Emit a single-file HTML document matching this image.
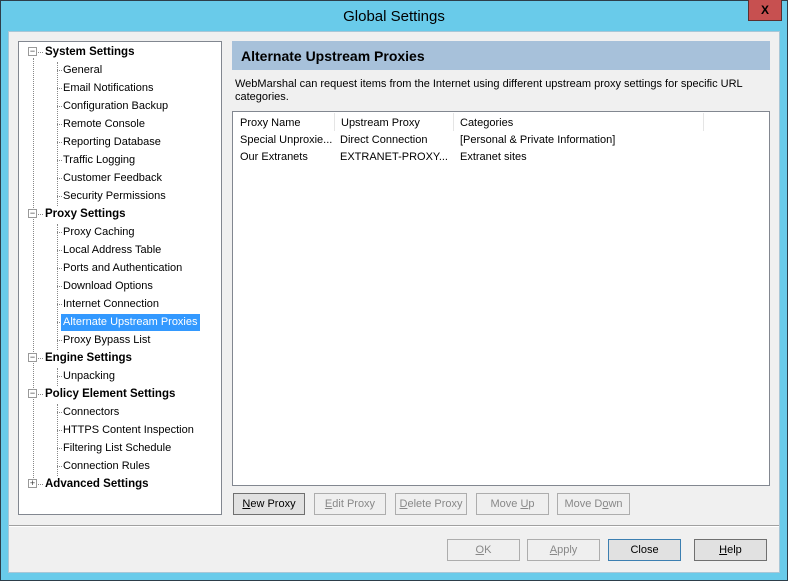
<!DOCTYPE html><html><head><style>
*{margin:0;padding:0;box-sizing:border-box}
body{width:788px;height:581px;background:#69cbea;font-family:"Liberation Sans",sans-serif;font-size:11px;color:#000;position:relative;overflow:hidden}
.frame{position:absolute;left:0;top:0;width:788px;height:581px;border:1px solid #2d3e4a}
.title{position:absolute;left:0;top:8px;width:788px;text-align:center;font-size:15px;color:#000}
.x{position:absolute;left:748px;top:0;width:34px;height:21px;background:#c75050;border:1px solid #5a3030;border-top:none;text-align:center;font-weight:bold;font-size:12px;line-height:20px}
.client{position:absolute;left:8px;top:31px;width:772px;height:542px;background:#f0f0f0;border:1px solid #a9c7d7}
.abs{position:absolute;white-space:nowrap}
.tree{position:absolute;left:18px;top:41px;width:204px;height:474px;background:#fff;border:1px solid #828790}
.top{font-weight:bold;font-size:11.5px}
.box{position:absolute;width:9px;height:9px;border:1px solid #999;background:#fff;font-size:9px;line-height:7px;text-align:center;color:#333}
.vd{position:absolute;border-left:1px dotted #888;width:0}
.hd{position:absolute;border-top:1px dotted #888;height:0}
.hdr{position:absolute;left:232px;top:41px;width:538px;height:29px;background:#a7c1da;font-weight:bold;font-size:14px;padding:7px 9px}
.list{position:absolute;left:232px;top:111px;width:538px;height:375px;background:#fff;border:1px solid #828790}
.col{position:absolute;top:1px;height:18px;border-right:1px solid #e5e5e5;padding:4px 6px;background:#fff}
.btn{position:absolute;height:22px;border:1px solid #adadad;background:#efefef;color:#888;text-align:center;line-height:20px}
.en{color:#000;background:#e1e1e1;border-color:#707070}
u{text-decoration:underline}
</style></head><body>
<div class="frame"></div>
<div class="title">Global Settings</div>
<div class="x">X</div>
<div class="client"></div>
<div class="tree">
<div class="vd" style="left:14px;top:16px;height:428px"></div>
<div class="vd" style="left:38px;top:20px;height:144px"></div>
<div class="vd" style="left:38px;top:182px;height:126px"></div>
<div class="vd" style="left:38px;top:326px;height:18px"></div>
<div class="vd" style="left:38px;top:362px;height:72px"></div>
</div>
<div id="t"></div>
<script>
var items=[["System Settings",1],["General"],["Email Notifications"],["Configuration Backup"],["Remote Console"],["Reporting Database"],["Traffic Logging"],["Customer Feedback"],["Security Permissions"],["Proxy Settings",1],["Proxy Caching"],["Local Address Table"],["Ports and Authentication"],["Download Options"],["Internet Connection"],["Alternate Upstream Proxies",0,1],["Proxy Bypass List"],["Engine Settings",1],["Unpacking"],["Policy Element Settings",1],["Connectors"],["HTTPS Content Inspection"],["Filtering List Schedule"],["Connection Rules"],["Advanced Settings",2]];
var h="";items.forEach(function(it,i){var y=43+i*18;
if(it[1]){h+='<div class="box" style="left:28px;top:'+(y+4)+'px">'+(it[1]==2?'+':'−')+'</div><div class="hd" style="left:38px;top:'+(y+9)+'px;width:5px"></div><div class="abs top" style="left:45px;top:'+(y+3)+'px">'+it[0]+'</div>';}
else{h+='<div class="hd" style="left:57px;top:'+(y+9)+'px;width:5px"></div>';
if(it[2])h+='<div class="abs" style="left:61px;top:'+(y+1)+'px;height:17px;padding:2px 2px 0 2px;background:#3399ff;color:#fff">'+it[0]+'</div>';
else h+='<div class="abs" style="left:63px;top:'+(y+3)+'px">'+it[0]+'</div>';}});
document.getElementById('t').innerHTML=h;
</script>
<div class="hdr">Alternate Upstream Proxies</div>
<div class="abs" style="left:235px;top:78px;line-height:13px">WebMarshal can request items from the Internet using different upstream proxy settings for specific URL<br>categories.</div>
<div class="list">
<div class="col" style="left:1px;width:101px">Proxy Name</div>
<div class="col" style="left:102px;width:119px">Upstream Proxy</div>
<div class="col" style="left:221px;width:250px">Categories</div>
<div class="abs" style="left:7px;top:22px">Special Unproxie...</div>
<div class="abs" style="left:107px;top:22px">Direct Connection</div>
<div class="abs" style="left:227px;top:22px">[Personal &amp; Private Information]</div>
<div class="abs" style="left:7px;top:39px">Our Extranets</div>
<div class="abs" style="left:107px;top:39px">EXTRANET-PROXY...</div>
<div class="abs" style="left:227px;top:39px">Extranet sites</div>
</div>
<div class="btn en" style="left:233px;top:493px;width:72px"><u>N</u>ew Proxy</div>
<div class="btn" style="left:314px;top:493px;width:72px"><u>E</u>dit Proxy</div>
<div class="btn" style="left:395px;top:493px;width:72px"><u>D</u>elete Proxy</div>
<div class="btn" style="left:476px;top:493px;width:73px">Move <u>U</u>p</div>
<div class="btn" style="left:557px;top:493px;width:73px">Move D<u>o</u>wn</div>
<div class="abs" style="left:9px;top:525px;width:770px;height:2px;border-top:1px solid #a0a0a0;border-bottom:1px solid #fff"></div>
<div class="btn" style="left:447px;top:539px;width:73px"><u>O</u>K</div>
<div class="btn" style="left:527px;top:539px;width:73px"><u>A</u>pply</div>
<div class="btn en" style="left:608px;top:539px;width:73px;border-color:#3c7fb1">Close</div>
<div class="btn en" style="left:694px;top:539px;width:73px"><u>H</u>elp</div>
</body></html>
